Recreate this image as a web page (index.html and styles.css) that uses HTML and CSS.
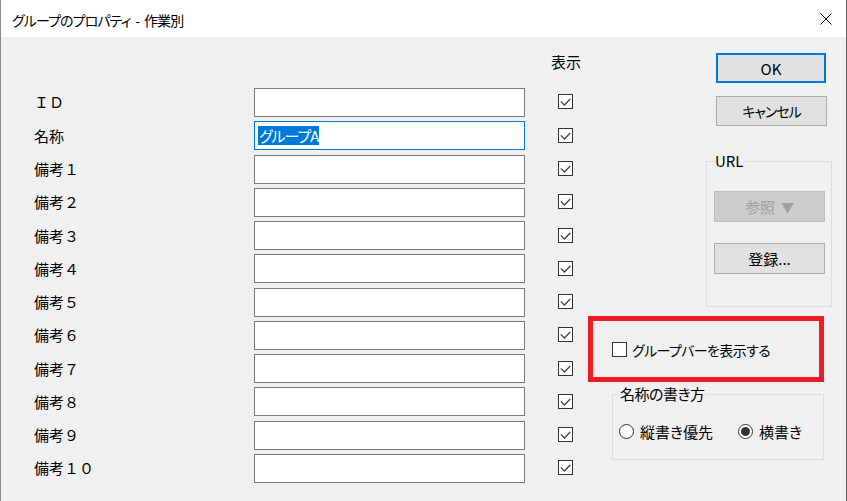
FILE: index.html
```html
<!DOCTYPE html>
<html lang="ja">
<head>
<meta charset="utf-8">
<title>グループのプロパティ - 作業別</title>
<link rel="stylesheet" href="styles.css">
</head>
<body>
<div class="window">
  <div class="titlebar">
    <span class="title">グループのプロパティ - 作業別</span>
    <span class="close"><svg width="12" height="12" viewBox="0 0 12 12"><path d="M0.5 0.5 L11.5 11.5 M11.5 0.5 L0.5 11.5" stroke="#000" stroke-width="1" fill="none"/></svg></span>
  </div>
  <div class="content">
    <div class="form">
      <div></div><div></div><div class="col-head">表示</div>

      <div class="label">ＩＤ</div><div class="field"></div><div class="cell"><span class="check"><svg width="15" height="15" viewBox="0 0 15 15"><rect x="0.5" y="0.5" width="14" height="14" fill="#fff" stroke="#333"/><polyline points="2.8,7.4 6.4,11 12.2,5" fill="none" stroke="#444" stroke-width="1.3"/></svg></span></div>
      <div class="label">名称</div><div class="field focused"><span class="sel">グループA</span></div><div class="cell"><span class="check"><svg width="15" height="15" viewBox="0 0 15 15"><rect x="0.5" y="0.5" width="14" height="14" fill="#fff" stroke="#333"/><polyline points="2.8,7.4 6.4,11 12.2,5" fill="none" stroke="#444" stroke-width="1.3"/></svg></span></div>
      <div class="label">備考１</div><div class="field"></div><div class="cell"><span class="check"><svg width="15" height="15" viewBox="0 0 15 15"><rect x="0.5" y="0.5" width="14" height="14" fill="#fff" stroke="#333"/><polyline points="2.8,7.4 6.4,11 12.2,5" fill="none" stroke="#444" stroke-width="1.3"/></svg></span></div>
      <div class="label">備考２</div><div class="field"></div><div class="cell"><span class="check"><svg width="15" height="15" viewBox="0 0 15 15"><rect x="0.5" y="0.5" width="14" height="14" fill="#fff" stroke="#333"/><polyline points="2.8,7.4 6.4,11 12.2,5" fill="none" stroke="#444" stroke-width="1.3"/></svg></span></div>
      <div class="label">備考３</div><div class="field"></div><div class="cell"><span class="check"><svg width="15" height="15" viewBox="0 0 15 15"><rect x="0.5" y="0.5" width="14" height="14" fill="#fff" stroke="#333"/><polyline points="2.8,7.4 6.4,11 12.2,5" fill="none" stroke="#444" stroke-width="1.3"/></svg></span></div>
      <div class="label">備考４</div><div class="field"></div><div class="cell"><span class="check"><svg width="15" height="15" viewBox="0 0 15 15"><rect x="0.5" y="0.5" width="14" height="14" fill="#fff" stroke="#333"/><polyline points="2.8,7.4 6.4,11 12.2,5" fill="none" stroke="#444" stroke-width="1.3"/></svg></span></div>
      <div class="label">備考５</div><div class="field"></div><div class="cell"><span class="check"><svg width="15" height="15" viewBox="0 0 15 15"><rect x="0.5" y="0.5" width="14" height="14" fill="#fff" stroke="#333"/><polyline points="2.8,7.4 6.4,11 12.2,5" fill="none" stroke="#444" stroke-width="1.3"/></svg></span></div>
      <div class="label">備考６</div><div class="field"></div><div class="cell"><span class="check"><svg width="15" height="15" viewBox="0 0 15 15"><rect x="0.5" y="0.5" width="14" height="14" fill="#fff" stroke="#333"/><polyline points="2.8,7.4 6.4,11 12.2,5" fill="none" stroke="#444" stroke-width="1.3"/></svg></span></div>
      <div class="label">備考７</div><div class="field"></div><div class="cell"><span class="check"><svg width="15" height="15" viewBox="0 0 15 15"><rect x="0.5" y="0.5" width="14" height="14" fill="#fff" stroke="#333"/><polyline points="2.8,7.4 6.4,11 12.2,5" fill="none" stroke="#444" stroke-width="1.3"/></svg></span></div>
      <div class="label">備考８</div><div class="field"></div><div class="cell"><span class="check"><svg width="15" height="15" viewBox="0 0 15 15"><rect x="0.5" y="0.5" width="14" height="14" fill="#fff" stroke="#333"/><polyline points="2.8,7.4 6.4,11 12.2,5" fill="none" stroke="#444" stroke-width="1.3"/></svg></span></div>
      <div class="label">備考９</div><div class="field"></div><div class="cell"><span class="check"><svg width="15" height="15" viewBox="0 0 15 15"><rect x="0.5" y="0.5" width="14" height="14" fill="#fff" stroke="#333"/><polyline points="2.8,7.4 6.4,11 12.2,5" fill="none" stroke="#444" stroke-width="1.3"/></svg></span></div>
      <div class="label">備考１０</div><div class="field"></div><div class="cell"><span class="check"><svg width="15" height="15" viewBox="0 0 15 15"><rect x="0.5" y="0.5" width="14" height="14" fill="#fff" stroke="#333"/><polyline points="2.8,7.4 6.4,11 12.2,5" fill="none" stroke="#444" stroke-width="1.3"/></svg></span></div>
    </div>

    <div class="side">
      <button class="btn btn-main btn-default">OK</button>
      <button class="btn btn-main btn-cancel">キャンセル</button>
      <fieldset class="group url-group">
        <legend>URL</legend>
        <button class="btn btn-inner btn-disabled">参照 <span class="tri">▼</span></button>
        <button class="btn btn-inner btn-register">登録...</button>
      </fieldset>
      <div class="highlight-box">
        <span class="box"></span>
        <span class="hl-label">グループバーを表示する</span>
      </div>
      <fieldset class="group name-group">
        <legend>名称の書き方</legend>
        <div class="radios">
          <span class="radio-item first"><span class="radio"></span><span>縦書き優先</span></span>
          <span class="radio-item"><span class="radio on"></span><span>横書き</span></span>
        </div>
      </fieldset>
    </div>
  </div>
</div>
</body>
</html>
```

FILE: styles.css
```css
* { box-sizing: border-box; }

body {
  margin: 0;
  background: #f0f0f0;
  font-family: "Noto Sans CJK JP", "Noto Sans", sans-serif;
  font-size: 15px;
  color: #000;
}

.window {
  width: 847px;
  height: 501px;
  background: #f0f0f0;
  border-left: 1px solid #8a8a8a;
  border-right: 1px solid #5e5e5e;
  display: flex;
  flex-direction: column;
  overflow: hidden;
}

.titlebar {
  height: 37px;
  flex: none;
  background: #fff;
  display: flex;
  align-items: center;
  justify-content: space-between;
  padding: 0 14px 0 11px;
}

.title {
  font-size: 14px;
  line-height: 1;
  font-feature-settings: "palt" 1;
  letter-spacing: -0.9px;
  word-spacing: 2.5px;
  margin-top: 2px;
}

.close {
  display: flex;
  margin-top: 1px;
}

.content {
  display: flex;
  flex: 1;
}

.form {
  display: grid;
  grid-template-columns: 220px 271px 62px;
  grid-template-rows: 31.73px;
  grid-auto-rows: 29px;
  row-gap: 4.27px;
  align-items: center;
  align-content: start;
  padding: 15px 0 0 33px;
}

.col-head {
  align-self: start;
  line-height: 20px;
  margin-left: 26px;
}

.label {
  line-height: 20px;
}

.field {
  height: 29px;
  background: #fff;
  border: 1px solid #7a7a7a;
  display: flex;
  align-items: center;
  padding-left: 3px;
}

.field.focused {
  border-color: #0078d7;
}

.sel {
  background: #0078d7;
  color: #fff;
  line-height: 19px;
  height: 19px;
  padding: 0 1px;
  font-feature-settings: "palt" 1;
  letter-spacing: -1px;
}

.cell {
  display: flex;
  align-items: center;
  padding-left: 33px;
}

.check {
  display: flex;
  margin-top: -1px;
}

.side {
  display: flex;
  flex-direction: column;
  align-items: flex-start;
  padding: 16px 0 0 1px;
  width: 246px;
}

.btn {
  font: inherit;
  font-feature-settings: "palt" 1;
  color: #000;
  background: #e1e1e1;
  border: 1px solid #adadad;
  padding: 0;
  line-height: 1;
  display: flex;
  align-items: center;
  justify-content: center;
}

.btn-main {
  width: 110px;
  height: 30px;
  margin-left: 128px;
}

.btn-default {
  border: 2px solid #0078d7;
}

.btn-cancel {
  margin-top: 13px;
  width: 111px;
  font-size: 14px;
  letter-spacing: -1px;
}

.group {
  margin: 0;
  border: 1px solid #dcdcdc;
  min-inline-size: 0;
}

.group legend {
  line-height: 18px;
  padding: 0 1px;
  font-feature-settings: "palt" 1;
}

.url-group {
  margin-top: 26px;
  margin-left: 118px;
  width: 126px;
  height: 155px;
  padding: 21px 0 0 7px;
}

.btn-inner {
  width: 111px;
  height: 31px;
}

.btn-disabled {
  background: #cccccc;
  border-color: #bfbfbf;
  color: #a0a0a0;
}

.tri {
  font-size: 13px;
  margin-left: 6px;
}

.btn-register {
  margin-top: 21px;
}

.highlight-box {
  margin-top: 9px;
  width: 236px;
  height: 66px;
  border: 5px solid #ed1c24;
  display: flex;
  align-items: center;
  gap: 5px;
  padding: 1px 0 0 19px;
  font-feature-settings: "palt" 1;
}

.hl-label {
  font-size: 14px;
  letter-spacing: -0.6px;
}

.box {
  width: 15px;
  height: 15px;
  background: #fff;
  border: 1px solid #333;
  flex: none;
}

.name-group {
  margin-top: 3px;
  margin-left: 24px;
  width: 212px;
  height: 75px;
  padding: 18px 0 0 6px;
}

.name-group legend {
  letter-spacing: -0.5px;
}

.radios {
  display: flex;
  align-items: center;
  height: 20px;
  font-feature-settings: "palt" 1;
}

.radio-item {
  display: flex;
  align-items: center;
  gap: 6px;
}

.radio-item.first {
  width: 119px;
}

.radio {
  width: 15px;
  height: 15px;
  border-radius: 50%;
  border: 1px solid #333;
  background: #fff;
  flex: none;
  display: flex;
  align-items: center;
  justify-content: center;
}

.radio.on::after {
  content: "";
  width: 9px;
  height: 9px;
  border-radius: 50%;
  background: #333;
}
```
